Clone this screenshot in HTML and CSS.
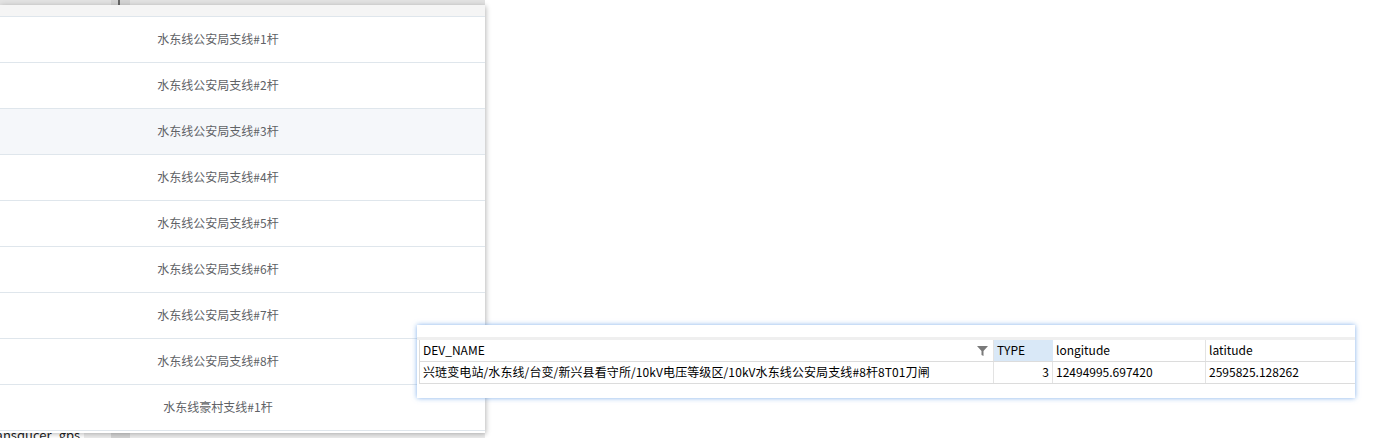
FILE: index.html
```html
<!DOCTYPE html>
<html lang="zh">
<head>
<meta charset="utf-8">
<link rel="stylesheet" href="styles.css">
<title>grid</title>
</head>
<body>
<div class="bg-top"><span class="bg-knob"></span></div>
<div class="bg-bottom"><span class="bg-text">transducer_gps</span><span class="bg-knob2"></span></div>

<div class="list-panel">
  <div class="list-head"></div>
  <div class="list-row"><div class="cell">水东线公安局支线#1杆</div></div>
  <div class="list-row"><div class="cell">水东线公安局支线#2杆</div></div>
  <div class="list-row hover"><div class="cell">水东线公安局支线#3杆</div></div>
  <div class="list-row"><div class="cell">水东线公安局支线#4杆</div></div>
  <div class="list-row"><div class="cell">水东线公安局支线#5杆</div></div>
  <div class="list-row"><div class="cell">水东线公安局支线#6杆</div></div>
  <div class="list-row"><div class="cell">水东线公安局支线#7杆</div></div>
  <div class="list-row"><div class="cell">水东线公安局支线#8杆</div></div>
  <div class="list-row"><div class="cell">水东线豪村支线#1杆</div></div>
</div>

<div class="grid-panel">
  <div class="grid-top"></div>
  <div class="grid-band"></div>
  <div class="grid">
    <div class="g-row g-head">
      <div class="g-cell c-name">DEV_NAME
        <svg class="funnel" width="11" height="10" viewBox="0 0 11 10"><path d="M0 0H11L6.5 5V10L4.5 9V5Z" fill="#7a7a7a"/></svg>
      </div>
      <div class="g-cell c-type sel">TYPE</div>
      <div class="g-cell c-lon">longitude</div>
      <div class="g-cell c-lat">latitude</div>
    </div>
    <div class="g-row">
      <div class="g-cell c-name tight">兴琏变电站/水东线/台变/新兴县看守所/10kV电压等级区/10kV水东线公安局支线#8杆8T01刀闸</div>
      <div class="g-cell c-type num">3</div>
      <div class="g-cell c-lon">12494995.697420</div>
      <div class="g-cell c-lat">2595825.128262</div>
    </div>
  </div>
</div>
</body>
</html>
```

FILE: styles.css
```css
html, body {
  margin: 0;
  padding: 0;
  background: #ffffff;
  width: 1380px;
  height: 438px;
  overflow: hidden;
  font-family: "Noto Sans CJK SC", "Noto Sans", sans-serif;
}

.bg-top {
  position: absolute;
  left: 0;
  top: 0;
  width: 485px;
  height: 6px;
  background: #e2e2e2;
}
.bg-knob {
  position: absolute;
  left: 111px;
  top: 0;
  width: 19px;
  height: 6px;
  background: #d4d4d4;
}
.bg-knob::after {
  content: "";
  position: absolute;
  left: 7px;
  top: 0;
  width: 2px;
  height: 6px;
  background: #666;
}
.bg-bottom {
  position: absolute;
  left: 0;
  top: 430px;
  width: 485px;
  height: 8px;
  background: #ececec;
  overflow: hidden;
}
.bg-text {
  position: absolute;
  left: -14px;
  top: -3px;
  font-size: 13px;
  line-height: 16px;
  color: #222;
  background: #fff;
  padding-right: 4px;
}
.bg-knob2 {
  position: absolute;
  left: 111px;
  top: 0;
  width: 19px;
  height: 8px;
  background: #d4d4d4;
}

.list-panel {
  position: absolute;
  left: 0;
  top: 5px;
  width: 485px;
  height: 428px;
  background: #fff;
  box-shadow: 1px 1px 5px rgba(0,0,0,0.28);
  overflow: hidden;
}
.list-head {
  height: 11px;
  background: #f5f5f5;
  border-bottom: 1px solid #dfe6ec;
}
.list-row {
  display: flex;
  height: 45px;
  border-bottom: 1px solid #dfe6ec;
  background: #fff;
}
.list-row.hover {
  background: #f5f7fa;
}
.list-row .cell {
  width: 436px;
  text-align: center;
  font-size: 12px;
  line-height: 43px;
  color: #606266;
}

.grid-panel {
  position: absolute;
  left: 417px;
  top: 325px;
  width: 938px;
  height: 73px;
  background: #fff;
  box-shadow: 0 0 5px rgba(90,150,230,0.75);
}
.grid-top {
  height: 12px;
}
.grid-band {
  height: 3px;
  background: #efefef;
}
.grid {
  margin-left: 2px;
  border-left: 1px solid #dcdcdc;
}
.g-row {
  display: flex;
  height: 21px;
  border-bottom: 1px solid #dcdcdc;
}
.g-cell {
  box-sizing: border-box;
  font-size: 12px;
  line-height: 20px;
  color: #000;
  padding-left: 3px;
  white-space: nowrap;
  border-right: 1px solid #e3e3e3;
  position: relative;
}
.g-cell.tight { letter-spacing: 0.1px; }
.c-name { width: 574px; }
.c-type { width: 59px; }
.c-lon { width: 153px; }
.c-lat { width: 149px; border-right: none; }
.g-cell.sel { background: #d9e8f7; border-right-color: #d9e8f7; }
.g-cell.num { text-align: right; padding-right: 3px; }
.funnel {
  position: absolute;
  right: 5px;
  top: 6px;
}
```
